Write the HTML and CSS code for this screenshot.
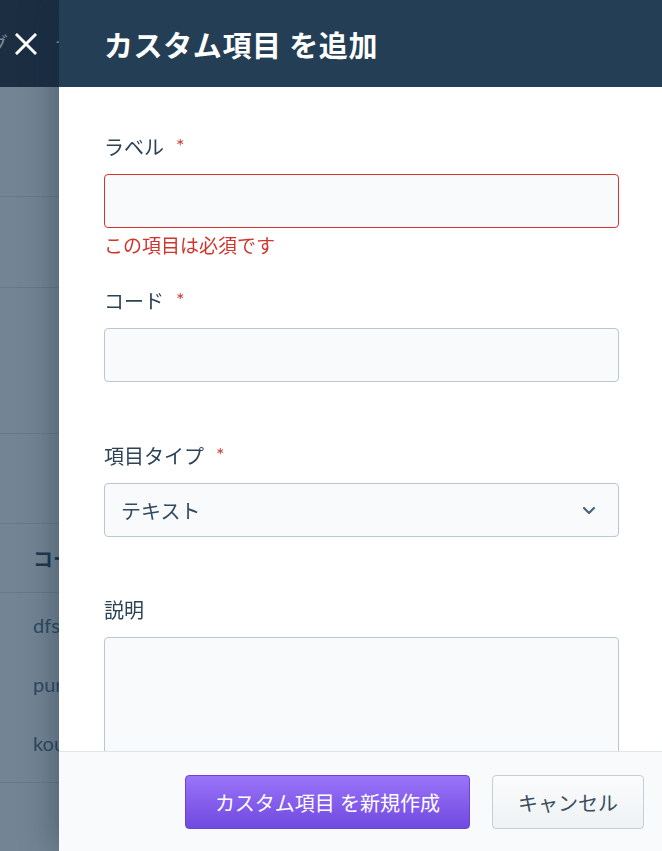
FILE: index.html
```html
<!DOCTYPE html>
<html lang="ja">
<head>
<meta charset="utf-8">
<title>カスタム項目を追加</title>
<link rel="stylesheet" href="styles.css">
</head>
<body>
<div class="page">
  <header class="bg-header">
    <span class="bg-crumb">グ</span>
    <svg class="bg-close" width="22" height="22" viewBox="0 0 22 22"><path d="M2 2 L20 20 M20 2 L2 20" stroke="#ffffff" stroke-width="3" stroke-linecap="square" fill="none"/></svg>
    <span class="bg-crumb">ヤ</span>
  </header>
  <div class="bg-body">
    <div class="bg-row r1"></div>
    <div class="bg-row r2"></div>
    <div class="bg-row r3"></div>
    <div class="bg-row r4"></div>
    <div class="bg-row r5"><span class="bg-th">コード</span></div>
    <div class="bg-list">
      <div class="bg-item">dfsdfs</div>
      <div class="bg-item">purchase</div>
      <div class="bg-item">kounyu</div>
    </div>
  </div>
</div>

<aside class="drawer">
  <header class="drawer-header">
    <h1 class="drawer-title">カスタム項目 を追加</h1>
  </header>
  <div class="drawer-body">
    <div class="field">
      <label class="field-label">ラベル<span class="req">*</span></label>
      <input class="control control-error" type="text">
      <div class="field-error">この項目は必須です</div>
    </div>
    <div class="field">
      <label class="field-label">コード<span class="req">*</span></label>
      <input class="control" type="text">
      <div class="field-error"></div>
    </div>
    <div class="field field-type">
      <label class="field-label">項目タイプ<span class="req">*</span></label>
      <div class="control select">
        <span class="select-value">テキスト</span>
        <svg class="chevron" width="14" height="9" viewBox="0 0 14 9"><path d="M2 2 L7 7 L12 2" stroke="#4a6278" stroke-width="2.2" fill="none" stroke-linecap="round" stroke-linejoin="round"/></svg>
      </div>
      <div class="field-error"></div>
    </div>
    <div class="field">
      <label class="field-label">説明</label>
      <textarea class="control textarea"></textarea>
    </div>
  </div>
  <footer class="drawer-footer">
    <button class="btn btn-primary" type="button">カスタム項目 を新規作成</button>
    <button class="btn btn-secondary" type="button">キャンセル</button>
  </footer>
</aside>
</body>
</html>
```

FILE: styles.css
```css
* { box-sizing: border-box; }

html, body {
  margin: 0;
  padding: 0;
  height: 100%;
}

body {
  font-family: "Lato", "Noto Sans CJK JP", sans-serif;
  background: #738594;
  overflow: hidden;
}

.page {
  height: 100%;
}

.bg-header {
  height: 87px;
  background: #1b2e42;
  display: flex;
  align-items: center;
  gap: 6px;
  margin-left: -12px;
}

.bg-crumb {
  font-size: 20px;
  color: #7d8a97;
}

.bg-close {
  margin-left: 1px;
  margin-right: 12px;
}

.bg-body {
  background: #738594;
}

.bg-row {
  border-bottom: 1px solid #66798a;
}

.r1 { height: 110px; }
.r2 { height: 91px; }
.r3 { height: 146px; }
.r4 { height: 90px; }
.r5 {
  height: 69px;
  display: flex;
  align-items: center;
  padding-left: 33px;
}

.bg-th {
  font-size: 20px;
  font-weight: 700;
  color: #1e3750;
}

.bg-list {
  padding: 2px 0 10px;
  border-bottom: 1px solid #66798a;
}

.bg-item {
  height: 59px;
  display: flex;
  align-items: center;
  padding-left: 33px;
  font-size: 20px;
  color: #2d4862;
}

/* drawer */
.drawer {
  position: fixed;
  top: 0;
  bottom: 0;
  left: 59px;
  right: 0;
  background: #ffffff;
  display: flex;
  flex-direction: column;
  box-shadow: -6px 0 30px rgba(20, 40, 60, 0.35);
}

.drawer-header {
  height: 87px;
  flex: none;
  background: #243e55;
  display: flex;
  align-items: center;
  padding-left: 45px;
}

.drawer-title {
  margin: 0;
  color: #ffffff;
  font-size: 29px;
  font-weight: 700;
  letter-spacing: 0.6px;
}

.drawer-body {
  flex: 1;
  overflow: hidden;
  padding: 45px 43px 0 45px;
}

.field {
  display: flex;
  flex-direction: column;
  margin-bottom: 25px;
}

.field-type {
  padding-top: 1px;
}

.field-label {
  font-size: 20px;
  line-height: 30px;
  color: #2c4257;
  margin-bottom: 12px;
}

.req {
  color: #d0342c;
  font-size: 20px;
  margin-left: 12px;
  vertical-align: 2px;
  line-height: 1;
}

.control {
  display: block;
  width: 100%;
  height: 54px;
  border: 1px solid #b9c7d3;
  border-radius: 4px;
  background: #f8fafc;
  font-family: inherit;
  font-size: 20px;
  color: #33495e;
  outline: none;
  margin: 0;
}

.control-error {
  border-color: #d0342c;
}

.field-error {
  min-height: 33px;
  padding-top: 3px;
  font-size: 19px;
  line-height: 29px;
  color: #d0342c;
}

.select {
  display: flex;
  align-items: center;
  justify-content: space-between;
  padding: 0 22px 0 16px;
}

.select-value {
  font-size: 20px;
  color: #33495e;
}

.textarea {
  height: 160px;
  resize: none;
}

.drawer-footer {
  height: 100px;
  flex: none;
  background: #f8fafb;
  border-top: 1px solid #dde4ea;
  display: flex;
  justify-content: flex-end;
  align-items: flex-start;
  gap: 22px;
  padding: 23px 18px 0 0;
}

.btn {
  height: 54px;
  border-radius: 4px;
  font-family: inherit;
  font-size: 20px;
  cursor: pointer;
}

.btn-primary {
  padding: 0 29px;
  color: #ffffff;
  border: 1px solid #6a45d6;
  background: linear-gradient(#9a74f8, #7049e0);
}

.btn-secondary {
  padding: 0 25px;
  color: #3a4d5f;
  border: 1px solid #c3ced7;
  background: linear-gradient(#fbfcfc, #eef2f4);
}
```
